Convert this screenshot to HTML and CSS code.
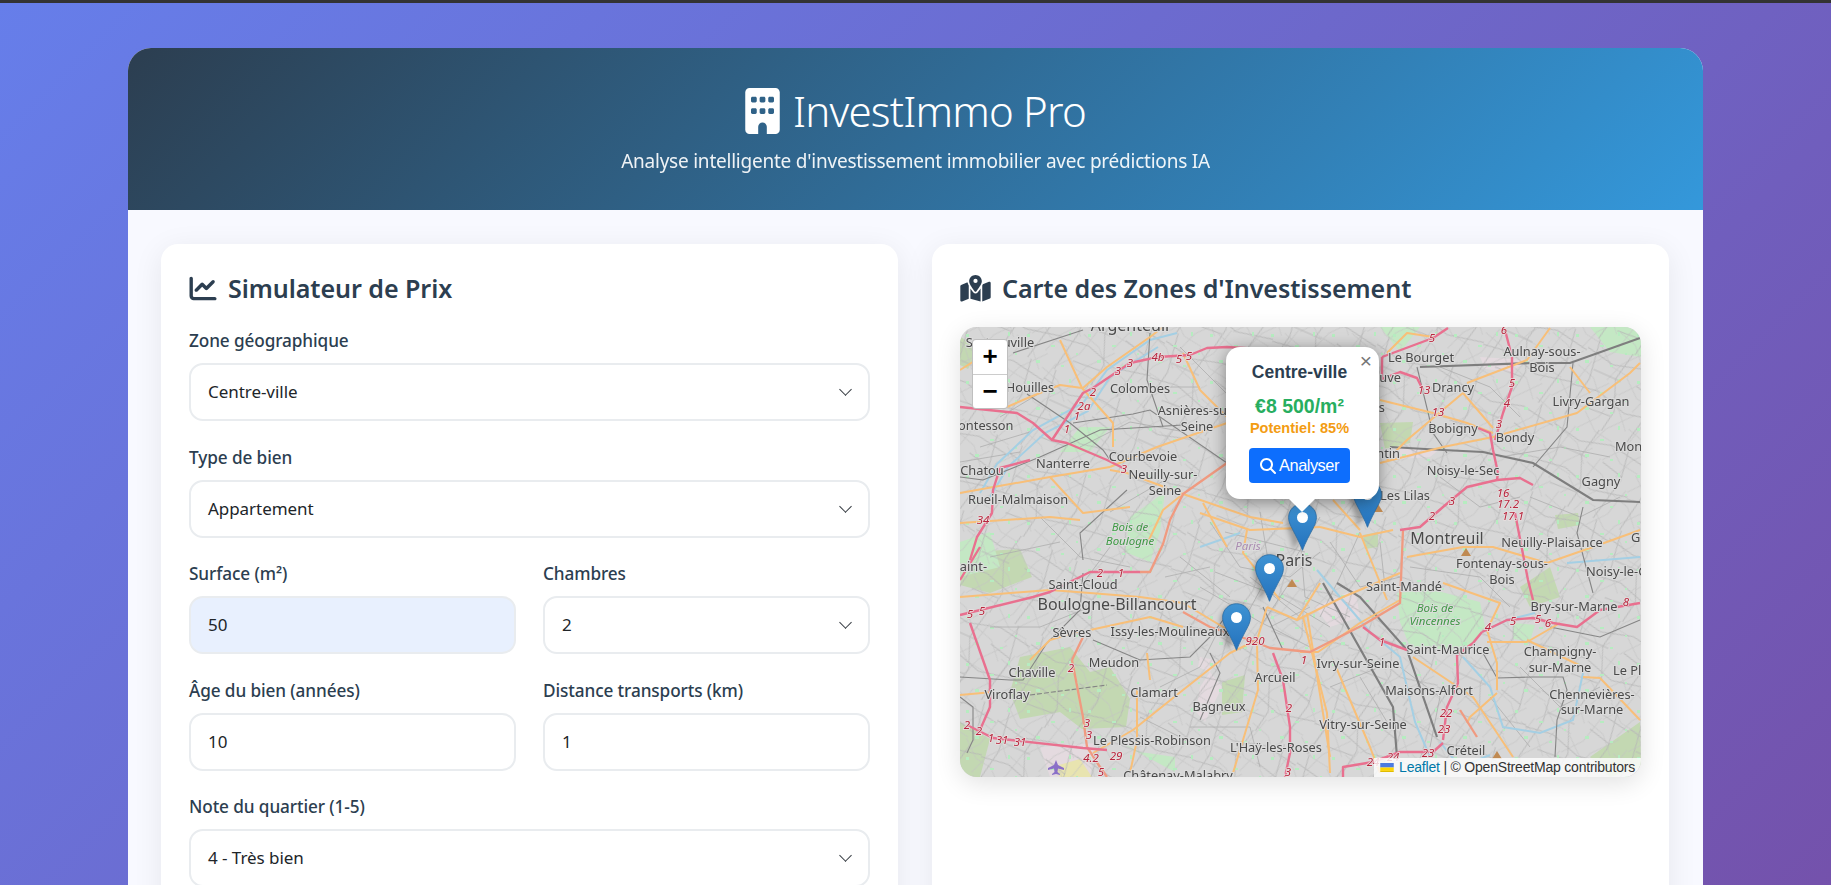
FILE: index.html
```
<!DOCTYPE html>
<html lang="fr">
<head>
	<meta charset="utf-8">
	<title>InvestImmo Pro</title>
	<link rel="stylesheet" href="styles.css">
</head>
<body>
	<div class="container">
		<header class="header">
			<h1>
				<svg class="logo" viewBox="0 0 384 512"><path d="M48 0C21.500 0 0 21.500 0 48V464c0 26.500 21.500 48 48 48h96V432c0-26.500 21.500-48 48-48s48 21.500 48 48v80h96c26.500 0 48-21.500 48-48V48c0-26.500-21.500-48-48-48H48zM64 240c0-8.800 7.200-16 16-16h32c8.800 0 16 7.200 16 16v32c0 8.800-7.200 16-16 16H80c-8.800 0-16-7.200-16-16V240zm112-16h32c8.800 0 16 7.200 16 16v32c0 8.800-7.200 16-16 16H176c-8.800 0-16-7.200-16-16V240c0-8.800 7.200-16 16-16zm80 16c0-8.800 7.200-16 16-16h32c8.800 0 16 7.200 16 16v32c0 8.800-7.200 16-16 16H272c-8.800 0-16-7.200-16-16V240zM80 96h32c8.800 0 16 7.200 16 16v32c0 8.800-7.200 16-16 16H80c-8.800 0-16-7.200-16-16V112c0-8.800 7.200-16 16-16zm80 16c0-8.800 7.200-16 16-16h32c8.800 0 16 7.200 16 16v32c0 8.800-7.200 16-16 16H176c-8.800 0-16-7.200-16-16V112zM272 96h32c8.800 0 16 7.200 16 16v32c0 8.800-7.200 16-16 16H272c-8.800 0-16-7.200-16-16V112c0-8.800 7.200-16 16-16z"/></svg>
				InvestImmo Pro
			</h1>
			<p>Analyse intelligente d'investissement immobilier avec prédictions IA</p>
		</header>

		<main class="content">
			<section class="card">
				<h2>
					<svg class="card-icon" viewBox="0 0 512 512"><path d="M64 64c0-17.700-14.300-32-32-32S0 46.300 0 64V400c0 44.200 35.800 80 80 80H480c17.700 0 32-14.300 32-32s-14.300-32-32-32H80c-8.800 0-16-7.200-16-16V64zm406.600 86.600c12.500-12.500 12.500-32.800 0-45.300s-32.800-12.500-45.300 0L320 210.700l-57.400-57.400c-12.500-12.500-32.800-12.500-45.300 0l-112 112c-12.500 12.500-12.500 32.800 0 45.300s32.800 12.500 45.300 0L240 221.300l57.400 57.400c12.500 12.500 32.800 12.500 45.300 0l128-128z"/></svg>
					Simulateur de Prix
				</h2>
				<div class="field">
					<label>Zone géographique</label>
					<div class="control select">Centre-ville</div>
				</div>
				<div class="field">
					<label>Type de bien</label>
					<div class="control select">Appartement</div>
				</div>
				<div class="field-row">
					<div class="field">
						<label>Surface (m²)</label>
						<div class="control autofilled">50</div>
					</div>
					<div class="field">
						<label>Chambres</label>
						<div class="control select">2</div>
					</div>
				</div>
				<div class="field-row">
					<div class="field">
						<label>Âge du bien (années)</label>
						<div class="control">10</div>
					</div>
					<div class="field">
						<label>Distance transports (km)</label>
						<div class="control">1</div>
					</div>
				</div>
				<div class="field">
					<label>Note du quartier (1-5)</label>
					<div class="control select">4 - Très bien</div>
				</div>
			</section>

			<section class="card">
				<h2>
					<svg class="card-icon map-icon" viewBox="0 0 576 512"><path d="M408 120c0 54.600-73.100 151.900-105.200 192c-7.700 9.600-22 9.600-29.600 0C241.100 271.900 168 174.600 168 120C168 53.700 221.700 0 288 0s120 53.700 120 120zm8 80.400c3.500-6.900 6.700-13.800 9.600-20.600c.5-1.200 1-2.500 1.500-3.700l116-46.400C558.800 123.400 576 135 576 152V422.800c0 9.800-6 18.600-15.100 22.300L416 503V200.400zM137.600 138.300c2.400 14.100 7.200 28.300 12.800 41.500c2.900 6.800 6.100 13.700 9.600 20.600V451.800L32.900 502.700C17.100 509 0 497.400 0 480.400V209.600c0-9.800 6-18.600 15.100-22.300l122.600-49zM327.800 332c13.900-17.400 35.700-45.700 56.200-77V504.300L192 449.400V255c20.500 31.300 42.300 59.600 56.200 77c20.500 25.600 59.100 25.600 79.600 0zM288 152a40 40 0 1 0 0-80 40 40 0 1 0 0 80z"/></svg>
					Carte des Zones d'Investissement
				</h2>
				<div class="map">
					<svg class="tiles" viewBox="0 0 681 450">
						<defs>
							<pattern id="streets" width="97" height="83" patternUnits="userSpaceOnUse" patternTransform="rotate(24)">
								<path d="M0 12L30 18L62 9L97 15M8 0L14 40L6 83M44 0L38 30L50 60L46 83M78 0L84 38L74 83M0 52L28 48L60 58L97 50M14 30L44 30M60 28L84 34M20 68L48 66"/>
							</pattern>
							<pattern id="lanes" width="53" height="41" patternUnits="userSpaceOnUse" patternTransform="rotate(-38)">
								<path d="M0 8L24 13L53 6M17 0L12 22L19 41M40 0L44 20L36 41M0 30L22 27L53 34"/>
							</pattern>
							<pattern id="parks" width="61" height="47" patternUnits="userSpaceOnUse">
								<path d="M6 7h3v3h-3zM30 18h4v2h-4zM48 5h2v4h-2zM15 33h4v3h-4zM40 38h3v2h-3zM55 26h2v2h-2z"/>
							</pattern>
							<path id="pin" d="M14.500 .7C6.700 .7 .6 6.900 .6 14.500c0 3.100 1 6 2.400 8.800C6.500 30.200 12.400 41 14.500 47.300c2.100-6.300 8-17.100 11.500-24c1.400-2.800 2.400-5.700 2.400-8.800C28.400 6.900 22.300 .7 14.500 .7z"/>
							<linearGradient id="pin-fill" x1="0" y1="0" x2="0" y2="1">
								<stop offset="0" stop-color="#3f93d3"/>
								<stop offset="1" stop-color="#2472bd"/>
							</linearGradient>
							<filter id="pin-shadow" x="-50%" y="-50%" width="200%" height="200%"><feGaussianBlur stdDeviation="2.500"/></filter>
						</defs>

						<g class="basemap">
							<rect class="ground" width="681" height="450"/>

							<g class="forest">
								<path d="M60 330L110 320L130 345L150 340L170 372L166 400L122 402L100 385L60 392L50 365z"/>
								<path d="M10 225L60 222L72 250L30 266L0 258z"/>
								<path d="M0 395L30 412L20 450L0 450z"/>
								<path d="M420 96L453 95L450 116L425 122z"/>
								<path d="M262 355L285 348L282 385L262 388z"/>
								<path d="M630 430L680 395L681 440L650 450z"/>
								<path d="M595 188L618 186L620 198L598 202z"/>
								<path d="M0 10L20 20L8 42L0 38z"/>
								<path d="M403 208L418 205L418 220L405 222z"/>
								<path d="M560 260L590 240L600 270L570 280z"/>
							</g>
							<g class="mint">
								<path d="M437 266L470 262L520 275L525 300L505 325L450 320L440 295z"/>
								<path d="M170 190L205 165L200 205L190 235L165 225z"/>
								<path d="M120 100L150 100L130 125L100 125z"/>
								<path d="M215 445L140 405L180 425L215 430z"/>
								<path d="M380 90L420 70L400 120z"/>
								<path d="M0 215L30 205L40 240L0 250z"/>
								<path d="M553 296L575 298L570 314L553 312z"/>
								<path d="M420 0L460 0L440 25z"/>
								<path d="M630 0L681 0L681 30L650 25z"/>
							</g>
							<g class="pinkish">
								<path d="M440 120L480 122L470 130L440 132z"/>
								<path d="M240 360L250 345L262 360L245 395L236 385z"/>
								<path d="M80 420L135 416L130 450L90 450z"/>
								<path d="M240 330L255 333L250 345L238 340z"/>
								<path d="M355 280L395 262L400 290L370 300z"/>
								<path d="M520 30L570 33L550 45L525 42z"/>
							</g>
							<path class="airport" d="M92 440L120 432L132 450L100 450z"/>

							<rect class="lanes" width="681" height="450"/>
							<rect class="streets" width="681" height="450"/>
							<rect class="dots" width="681" height="450"/>

							<path class="minor" d="M250 195L280 240L330 250L360 225M300 185L310 245L280 300M340 210L345 270L390 290M370 215L400 260L440 250M255 245L320 270L370 300M240 260L300 295L350 320M220 230L270 270M360 190L330 240M400 205L380 250L360 290M205 250L250 240M420 215L425 260M265 205L345 225M290 250L340 290M330 255L300 300M310 300L350 280M150 185L210 150M120 120L170 95L225 105M180 60L240 60M220 20L300 100M40 90L90 60M20 120L70 105M0 135L60 125M80 190L120 230L170 240M30 230L100 215M200 360L240 340L260 300M120 260L150 220M480 40L530 60L560 90M540 130L600 120L650 130M480 150L520 180L560 170M570 170L620 190L660 170M450 240L520 250L550 280M560 340L600 380L640 360M530 370L570 420M440 340L480 370L470 420M400 350L430 400M370 360L420 340M230 400L290 400L300 440M80 300L130 280M30 300L80 300M180 390L240 420"/>

							<g class="river">
								<path d="M20 166L37 137L73 103L123 76L147 43L190 13L217 6"/>
								<path d="M30 170L48 140L85 106L128 84L150 50L198 20"/>
								<path d="M240 220L280 206"/>
								<path d="M357 243L380 270L410 305L440 330L455 395L470 430"/>
								<path d="M503 330L530 360L543 400L580 406L613 393L623 346"/>
								<path d="M522 305L547 293L575 286"/>
								<path d="M607 236L680 230"/>
								<path d="M480 415L500 440L530 428"/>
							</g>

							<g class="rail">
								<path d="M53 26L123 3"/>
								<path d="M67 67L110 96L143 123L150 133"/>
								<path d="M0 150L23 153L80 130L140 103L223 98"/>
								<path d="M113 96L173 87L190 83L267 136"/>
								<path d="M190 6L187 53L203 100"/>
								<path d="M123 233L120 206L167 163"/>
								<path d="M457 40L473 106L487 126"/>
								<path d="M623 180L617 206L633 266"/>
								<path d="M613 36L607 100L573 140"/>
								<path d="M523 326L537 351L573 350L603 350L607 363L597 393L595 430"/>
								<path d="M590 300L640 310L680 293"/>
								<path d="M133 313L180 333L230 330L250 310L273 280"/>
								<path d="M250 326L260 346L240 393"/>
								<path d="M0 370L13 380L13 413L7 426"/>
								<path d="M0 350L50 353L63 353L87 316L120 283L123 246"/>
								<path d="M303 280L323 323"/>
								<path class="dashed" d="M70 368L147 358"/>
								<path class="thick" d="M460 40L573 36L610 36L680 11"/>
								<path class="thick" d="M430 120L483 123L523 125L573 136L633 173L680 175"/>
								<path class="thick" d="M363 256L433 380L437 430"/>
								<path class="thick" d="M377 256L400 270L447 323L477 410"/>
							</g>

							<g class="trunk">
								<path d="M0 43L27 26"/>
								<path d="M100 13L122 61L153 96L153 120"/>
								<path d="M47 80L70 70L100 58L122 61"/>
								<path d="M123 61L147 40L190 10L203 0"/>
								<path d="M223 26L240 63L267 90"/>
								<path d="M150 140L197 120L267 96"/>
								<path d="M0 166L90 150L150 140"/>
								<path d="M150 143L167 146L223 167L290 190L323 196"/>
								<path d="M90 150L123 186L170 180"/>
								<path d="M223 167L203 183L187 217"/>
								<path d="M0 196L90 190L120 193"/>
								<path d="M243 176L267 220"/>
								<path d="M420 136L483 120L533 110L617 86L670 46L680 36"/>
								<path d="M420 73L473 86L507 96L533 106"/>
								<path d="M427 133L447 113L503 66L533 101"/>
								<path d="M610 40L630 66"/>
								<path d="M427 26L447 6L473 10"/>
								<path d="M590 1L567 33L507 56"/>
								<path d="M447 230L503 220L533 220L587 236L633 220L680 203"/>
								<path d="M360 200L400 210L433 203"/>
								<path d="M373 173L400 203"/>
								<path d="M400 206L427 273"/>
								<path d="M240 186L290 203L360 200"/>
								<path d="M287 203L283 226L320 273"/>
								<path d="M0 270L90 263L130 266L180 270L223 276L273 306"/>
								<path d="M130 303L190 290L223 300"/>
								<path d="M307 280L297 313L270 326L223 363L173 403L133 426"/>
								<path d="M307 280L337 293L383 270L440 246"/>
								<path d="M343 290L367 386L370 446"/>
								<path d="M360 256L337 293"/>
								<path d="M297 316L298 363L283 413L273 446"/>
								<path d="M373 333L410 420L420 446"/>
								<path d="M177 363L177 413L170 446"/>
								<path d="M187 326L190 353"/>
								<path d="M33 365L0 368"/>
								<path d="M70 333L90 313L123 303"/>
								<path d="M340 325L358 325L400 296L440 273"/>
								<path d="M453 330L513 370L553 430"/>
								<path d="M537 363L537 336L527 303L540 276L483 256"/>
								<path d="M527 315L567 315L600 296"/>
								<path d="M537 366L510 390L507 396"/>
								<path d="M623 350L640 351L680 393"/>
								<path d="M347 286L370 430"/>
								<path d="M567 313L623 340"/>
							</g>

							<g class="salmon">
								<path d="M267 136L223 167L210 193L203 217L190 245L180 245"/>
								<path d="M223 285L250 300L290 313L310 321L350 325L403 298L440 276L443 203"/>
								<path d="M112 333L123 390L127 420"/>
								<path d="M112 333L123 310"/>
								<path d="M127 420L140 440L147 450"/>
								<path d="M500 383L517 410"/>
							</g>

							<g class="motorway">
								<path d="M92 113L123 66L133 61L170 36L198 30L230 28L247 21L267 20L300 22"/>
								<path d="M422 30L473 11L488 1"/>
								<path d="M0 80L57 86L73 96L92 113L107 116L147 133L165 142"/>
								<path d="M40 141L70 133"/>
								<path d="M40 141L33 163L32 186L17 210L10 233"/>
								<path d="M0 288L73 270L90 265L130 245L180 245"/>
								<path d="M422 30L422 52L440 45L457 51L463 63"/>
								<path d="M518 101L530 106L533 123L538 146L537 153"/>
								<path d="M545 3L552 30L552 60L543 86L535 113"/>
								<path d="M537 153L507 160L483 180L460 200L440 203"/>
								<path d="M537 153L560 151L573 158"/>
								<path d="M555 186L568 253L573 273"/>
								<path d="M403 300L420 313L447 323"/>
								<path d="M497 328L498 356L487 380L483 413"/>
								<path d="M522 305L513 316L497 328"/>
								<path d="M522 305L547 293L573 291L593 296L617 300L640 283L680 276"/>
								<path d="M383 450L383 440L413 435L440 425L473 425L483 416"/>
								<path d="M313 326L323 353L330 400L330 426L325 450"/>
								<path d="M7 398L33 411L123 421L147 423"/>
								<path d="M10 296L30 353L30 380L20 403"/>
								<path d="M20 220L0 253"/>
							</g>

							<g class="peak">
								<path d="M332 252L337 260L327 260z"/>
								<path d="M506 221L511 229L501 229z"/>
								<path d="M418 177L423 185L413 185z"/>
								<path d="M537 424L542 432L532 432z"/>
							</g>
							<path class="plane" d="M96 433L98 438L104 441V443L98 441.500L97.500 445L100 447V448L96 447L92 448V447L94.500 445L94 441.500L88 443V441L94 438z"/>

							<g class="labels">
								<text class="big" x="170" y="4">Argenteuil</text>
								<text x="40" y="20">Sartrouville</text>
								<text x="70" y="65">Houilles</text>
								<text x="180" y="66">Colombes</text>
								<text x="237" y="88">Asnières-sur-</text>
								<text x="237" y="104">Seine</text>
								<text x="20" y="103">Montesson</text>
								<text x="183" y="134">Courbevoie</text>
								<text x="103" y="141">Nanterre</text>
								<text x="22" y="148">Chatou</text>
								<text x="203" y="152">Neuilly-sur-</text>
								<text x="205" y="168">Seine</text>
								<text x="58" y="177">Rueil-Malmaison</text>
								<text class="wood" x="170" y="204">Bois de</text>
								<text class="wood" x="170" y="218">Boulogne</text>
								<text class="district" x="288" y="223">Paris</text>
								<text class="big" x="334" y="239">Paris</text>
								<text x="461" y="35">Le Bourget</text>
								<text x="582" y="29">Aulnay-sous-</text>
								<text x="582" y="45">Bois</text>
								<text x="493" y="65">Drancy</text>
								<text x="631" y="79">Livry-Gargan</text>
								<text x="493" y="106">Bobigny</text>
								<text x="555" y="115">Bondy</text>
								<text class="big" x="487" y="217">Montreuil</text>
								<text class="start" x="655" y="124">Montfermeil</text>
								<text x="503" y="148">Noisy-le-Sec</text>
								<text x="641" y="159">Gagny</text>
								<text x="445" y="173">Les Lilas</text>
								<text x="592" y="220">Neuilly-Plaisance</text>
								<text x="542" y="241">Fontenay-sous-</text>
								<text x="542" y="257">Bois</text>
								<text class="start" x="626" y="249">Noisy-le-Grand</text>
								<text x="444" y="264">Saint-Mandé</text>
								<text class="end" x="440" y="131">Pantin</text>
								<text class="end" x="441" y="55">La Courneuve</text>
								<text class="end" x="425" y="85">Aubervilliers</text>
								<text class="start" x="671" y="215">Gournay</text>
								<text class="end" x="27" y="244">Saint-</text>
								<text x="123" y="262">Saint-Cloud</text>
								<text class="big" x="157" y="283">Boulogne-Billancourt</text>
								<text x="112" y="310">Sèvres</text>
								<text x="210" y="309">Issy-les-Moulineaux</text>
								<text x="154" y="340">Meudon</text>
								<text x="72" y="350">Chaville</text>
								<text x="47" y="372">Viroflay</text>
								<text x="194" y="370">Clamart</text>
								<text x="259" y="384">Bagneux</text>
								<text x="315" y="355">Arcueil</text>
								<text x="398" y="341">Ivry-sur-Seine</text>
								<text x="403" y="402">Vitry-sur-Seine</text>
								<text x="192" y="418">Le Plessis-Robinson</text>
								<text x="316" y="425">L'Haÿ-les-Roses</text>
								<text x="218" y="453">Châtenay-Malabry</text>
								<text x="488" y="327">Saint-Maurice</text>
								<text x="469" y="368">Maisons-Alfort</text>
								<text x="614" y="284">Bry-sur-Marne</text>
								<text class="wood" x="475" y="285">Bois de</text>
								<text class="wood" x="475" y="298">Vincennes</text>
								<text x="600" y="329">Champigny-</text>
								<text x="600" y="345">sur-Marne</text>
								<text class="start" x="653" y="348">Le Plessis</text>
								<text x="632" y="372">Chennevières-</text>
								<text x="632" y="387">sur-Marne</text>
								<text x="506" y="428">Créteil</text>
							</g>

							<g class="shields">
								<text x="198" y="34">4b</text><text x="219" y="36">5</text><text x="229" y="33">5</text>
								<text x="170" y="40">3</text><text x="158" y="48">3</text><text x="133" y="69">2</text>
								<text x="124" y="83">2a</text><text x="117" y="93">1</text><text x="107" y="106">1</text>
								<text x="164" y="146">3</text><text x="23" y="197">34</text>
								<text x="472" y="15">5</text><text x="544" y="7">6</text><text x="464" y="67">13</text>
								<text x="478" y="89">13</text><text x="552" y="60">5</text><text x="547" y="80">4</text>
								<text x="539" y="101">3</text><text x="543" y="170">16</text><text x="548" y="181">17.2</text>
								<text x="553" y="193">17.1</text><text x="492" y="178">3</text><text x="472" y="193">2</text>
								<text x="140" y="250">2</text><text x="161" y="250">1</text><text x="10" y="291">5</text>
								<text x="22" y="288">5</text><text x="111" y="345">2</text><text x="127" y="400">3</text>
								<text x="129" y="412">3</text><text x="131" y="435">4.2</text><text x="156" y="433">29</text>
								<text x="141" y="449">5</text><text x="7" y="402">2</text><text x="19" y="408">2</text>
								<text x="31" y="415">1</text><text x="42" y="417">31</text><text x="60" y="419">31</text>
								<text x="295" y="318">920</text><text x="344" y="337">1</text><text x="329" y="385">2</text>
								<text x="328" y="449">3</text><text x="422" y="319">1</text><text x="553" y="298">5</text>
								<text x="578" y="296">5</text><text x="588" y="300">6</text><text x="528" y="304">4</text>
								<text x="666" y="279">8</text><text x="486" y="390">22</text><text x="484" y="406">23</text>
								<text x="468" y="430">23</text><text x="433" y="434">24</text><text x="413" y="439">24</text>
							</g>
						</g>

						<g class="markers">
							<use href="#pin" class="pin-shadow" transform="translate(393 153) skewX(-12)"/>
							<use href="#pin" class="pin-shadow" transform="translate(329 176) skewX(-12)"/>
							<use href="#pin" class="pin-shadow" transform="translate(296 227) skewX(-12)"/>
							<use href="#pin" class="pin-shadow" transform="translate(263 276) skewX(-12)"/>
							<g transform="translate(393 153)"><use href="#pin" class="pin"/><circle cx="14.500" cy="14.500" r="5.500"/></g>
							<g transform="translate(328 176)"><use href="#pin" class="pin"/><circle cx="14.500" cy="14.500" r="5.500"/></g>
							<g transform="translate(295 227)"><use href="#pin" class="pin"/><circle cx="14.500" cy="14.500" r="5.500"/></g>
							<g transform="translate(262 276)"><use href="#pin" class="pin"/><circle cx="14.500" cy="14.500" r="5.500"/></g>
						</g>
					</svg>

					<div class="zoom-control">
						<span class="zoom-btn">+</span>
						<span class="zoom-btn">−</span>
					</div>

					<div class="popup">
						<span class="popup-close">×</span>
						<h4>Centre-ville</h4>
						<div class="popup-price">€8 500/m²</div>
						<div class="popup-potential">Potentiel: 85%</div>
						<button class="popup-btn">
							<svg viewBox="0 0 512 512"><path d="M416 208c0 45.900-14.900 88.300-40 122.700L502.600 457.400c12.500 12.500 12.500 32.800 0 45.300s-32.800 12.500-45.300 0L330.700 376c-34.400 25.200-76.800 40-122.700 40C93.100 416 0 322.900 0 208S93.100 0 208 0S416 93.100 416 208zM208 352a144 144 0 1 0 0-288 144 144 0 1 0 0 288z"/></svg>
							Analyser
						</button>
						<i class="popup-tip"></i>
					</div>

					<div class="attribution">
						<svg class="flag" viewBox="0 0 12 8"><path fill="#4c7be1" d="M0 0h12v4H0z"/><path fill="#ffd500" d="M0 4h12v3H0z"/><path fill="#e0bc00" d="M0 7h12v1H0z"/></svg>
						<a>Leaflet</a> | © OpenStreetMap contributors
					</div>
				</div>
			</section>
		</main>
	</div>
</body>
</html>
```

FILE: styles.css
```
* {
	box-sizing: border-box;
}

body {
	min-height: 1300px;
	margin: 0;
	padding: 45px 128px 40px;
	border-top: 3px solid #333;
	font-family: "Noto Sans", "Open Sans", sans-serif;
	color: #2c3e50;
	background: linear-gradient(135deg, #667eea 0%, #764ba2 100%);
}

.container {
	border-radius: 23px;
	overflow: hidden;
	background: #f8f9ff;
}

/* en-tête */
.header {
	height: 162px;
	padding-top: 33px;
	text-align: center;
	color: #fff;
	background: linear-gradient(135deg, #2c3e50 0%, #3498db 100%);
}

.header h1 {
	display: flex;
	justify-content: center;
	align-items: center;
	gap: 13px;
	margin: 0;
	font-size: 42px;
	line-height: 60px;
	font-weight: 300;
	letter-spacing: -0.8px;
}

.logo {
	width: 35px;
	height: 46px;
	fill: #fff;
}

.header p {
	margin: 7px 0 0;
	font-size: 19px;
	line-height: 26px;
	font-weight: 400;
	opacity: 0.92;
	letter-spacing: -0.23px;
}

/* colonnes */
.content {
	display: grid;
	grid-template-columns: 1fr 1fr;
	gap: 34px;
	padding: 34px 34px 40px 33px;
}

.card {
	padding: 26px 28px 40px;
	border-radius: 17px;
	background: #fff;
	box-shadow: 0 6px 30px rgba(0, 0, 0, 0.08);
}

.card h2 {
	display: flex;
	align-items: center;
	gap: 11px;
	height: 36px;
	margin: 0 0 21px;
	font-size: 25.100px;
	font-weight: 600;
	letter-spacing: -0.07px;
}

.card-icon {
	width: 28px;
	height: 27px;
	fill: #2c3e50;
}

.map-icon {
	width: 31px;
}

/* formulaire */
.field {
	margin-bottom: 24.600px;
}

h2 + .field {
	margin-top: 23px;
}

.field-row {
	display: grid;
	grid-template-columns: 1fr 1fr;
	gap: 27px;
}

.field label {
	display: block;
	margin-bottom: 10px;
	font-size: 17.200px;
	line-height: 24px;
	font-weight: 500;
	letter-spacing: -0.1px;
}

.control {
	height: 58px;
	padding: 0 17px;
	border: 2px solid #e9ecef;
	border-radius: 14px;
	background: #fff;
	font-size: 17px;
	line-height: 54px;
	color: #212529;
	letter-spacing: -0.05px;
}

.control.autofilled {
	background: #e8f0fe;
}

.select {
	position: relative;
}

.select::after {
	content: "";
	position: absolute;
	right: 18px;
	top: 20px;
	width: 8px;
	height: 8px;
	border-right: 1.600px solid #343a40;
	border-bottom: 1.600px solid #343a40;
	transform: rotate(45deg);
}

/* carte */
.map {
	position: relative;
	height: 450px;
	border-radius: 17px;
	overflow: hidden;
	background: #d5d5d5;
	box-shadow: 0 6px 26px rgba(0, 0, 0, 0.12);
}

.tiles {
	display: block;
	width: 100%;
	height: 100%;
}

.basemap {
	filter: blur(0.45px);
}

.ground {
	fill: #d7d7d7;
}

.forest path {
	fill: #c3d8b2;
}

.mint path {
	fill: #c4e8c4;
}

.pinkish path {
	fill: #e4dadf;
}

.airport {
	fill: #e8e4b0;
}

.streets {
	fill: url(#streets);
}

.lanes {
	fill: url(#lanes);
}

#streets path {
	fill: none;
	stroke: #b6b6b6;
	stroke-width: 0.8;
}

#lanes path {
	fill: none;
	stroke: #c2c2c2;
	stroke-width: 0.6;
}

.dots {
	fill: url(#parks);
}

#parks path {
	fill: #b6ecc0;
}

.minor {
	fill: none;
	stroke: #adadad;
	stroke-width: 0.8;
}

.river path {
	fill: none;
	stroke: #a4cfe4;
	stroke-width: 2;
}

.rail path {
	fill: none;
	stroke: #858585;
	stroke-width: 1.100;
}

.rail .thick {
	stroke-width: 2.200;
	stroke: #7e7e7e;
}

.rail .dashed {
	stroke-dasharray: 5 2;
}

.trunk path {
	fill: none;
	stroke: #f8bf78;
	stroke-width: 2;
	stroke-linejoin: round;
}

.salmon path {
	fill: none;
	stroke: #f09a80;
	stroke-width: 2.300;
	stroke-linejoin: round;
}

.motorway path {
	fill: none;
	stroke: #e9708f;
	stroke-width: 2.400;
	stroke-linejoin: round;
}

.peak path {
	fill: #c08a52;
}

.plane {
	fill: #8a6fc8;
}

.labels text {
	font: 12.800px "Noto Sans", sans-serif;
	fill: #4a4a4a;
	text-anchor: middle;
	stroke: #dcdcdc;
	stroke-width: 2px;
	paint-order: stroke;
}

.labels .big {
	font-size: 16px;
}

.labels .start {
	text-anchor: start;
}

.labels .end {
	text-anchor: end;
}

.labels .wood {
	font-size: 11.500px;
	font-style: italic;
	fill: #3f9a45;
}

.labels .district {
	font-size: 11.500px;
	font-style: italic;
	fill: #a98bb0;
}

.shields text {
	font: italic 11.500px "Noto Sans", sans-serif;
	fill: #b8263e;
	text-anchor: middle;
	stroke: #e8e0e0;
	stroke-width: 1.500px;
	paint-order: stroke;
}

.pin {
	fill: url(#pin-fill);
	stroke: #2a6ca5;
	stroke-width: 0.8;
}

.pin-shadow {
	fill: rgba(0, 0, 0, 0.28);
	filter: url(#pin-shadow);
}

.markers circle {
	fill: #fff;
}

.zoom-control {
	position: absolute;
	left: 12px;
	top: 12px;
	width: 36px;
	border: 1px solid rgba(0, 0, 0, 0.25);
	border-radius: 4px;
	overflow: hidden;
	background: #fff;
}

.zoom-btn {
	display: block;
	height: 34px;
	font: bold 26px/33px "Liberation Sans", sans-serif;
	text-align: center;
	color: #000;
}

.zoom-btn + .zoom-btn {
	border-top: 1px solid #ccc;
}

.popup {
	position: absolute;
	left: 266px;
	top: 20px;
	width: 153px;
	height: 152px;
	padding: 15px 6px 0 0;
	border-radius: 14px;
	background: #fff;
	font-family: "Liberation Sans", sans-serif;
	text-align: center;
	box-shadow: 0 3px 16px rgba(0, 0, 0, 0.4);
}

.popup h4 {
	margin: 0 0 13px;
	font-size: 17.500px;
	line-height: 20px;
	font-weight: 700;
	color: #2c3e50;
}

.popup-price {
	font-size: 19.500px;
	line-height: 22px;
	font-weight: 700;
	color: #27ae60;
}

.popup-potential {
	margin: 2px 0 11px;
	font-size: 14.500px;
	line-height: 18px;
	font-weight: 700;
	color: #f39c12;
}

.popup-btn {
	display: inline-flex;
	justify-content: center;
	align-items: center;
	gap: 3px;
	width: 101px;
	height: 35px;
	padding: 0;
	border: 0;
	border-radius: 4px;
	background: #0d6efd;
	color: #fff;
	font: 16.400px "Liberation Sans", sans-serif;
	letter-spacing: -0.5px;
}

.popup-btn svg {
	width: 16px;
	height: 16px;
	fill: #fff;
}

.popup-close {
	position: absolute;
	right: 7px;
	top: 3px;
	font: 21px/22px "Liberation Sans", sans-serif;
	color: #757575;
}

.popup-tip {
	position: absolute;
	left: 66px;
	bottom: -10px;
	width: 20px;
	height: 20px;
	background: #fff;
	clip-path: polygon(0 50%, 100% 50%, 50% 100%);
	transform: scale(1.300);
}

.attribution {
	position: absolute;
	right: 0;
	bottom: 0;
	height: 19px;
	padding: 0 6px;
	background: rgba(255, 255, 255, 0.8);
	font: 14px/19px "Liberation Sans", sans-serif;
	letter-spacing: -0.2px;
	color: #333;
	white-space: nowrap;
}

.attribution a {
	color: #0078a8;
}

.flag {
	display: inline-block;
	width: 14px;
	height: 9px;
	margin-right: 1px;
}
```
